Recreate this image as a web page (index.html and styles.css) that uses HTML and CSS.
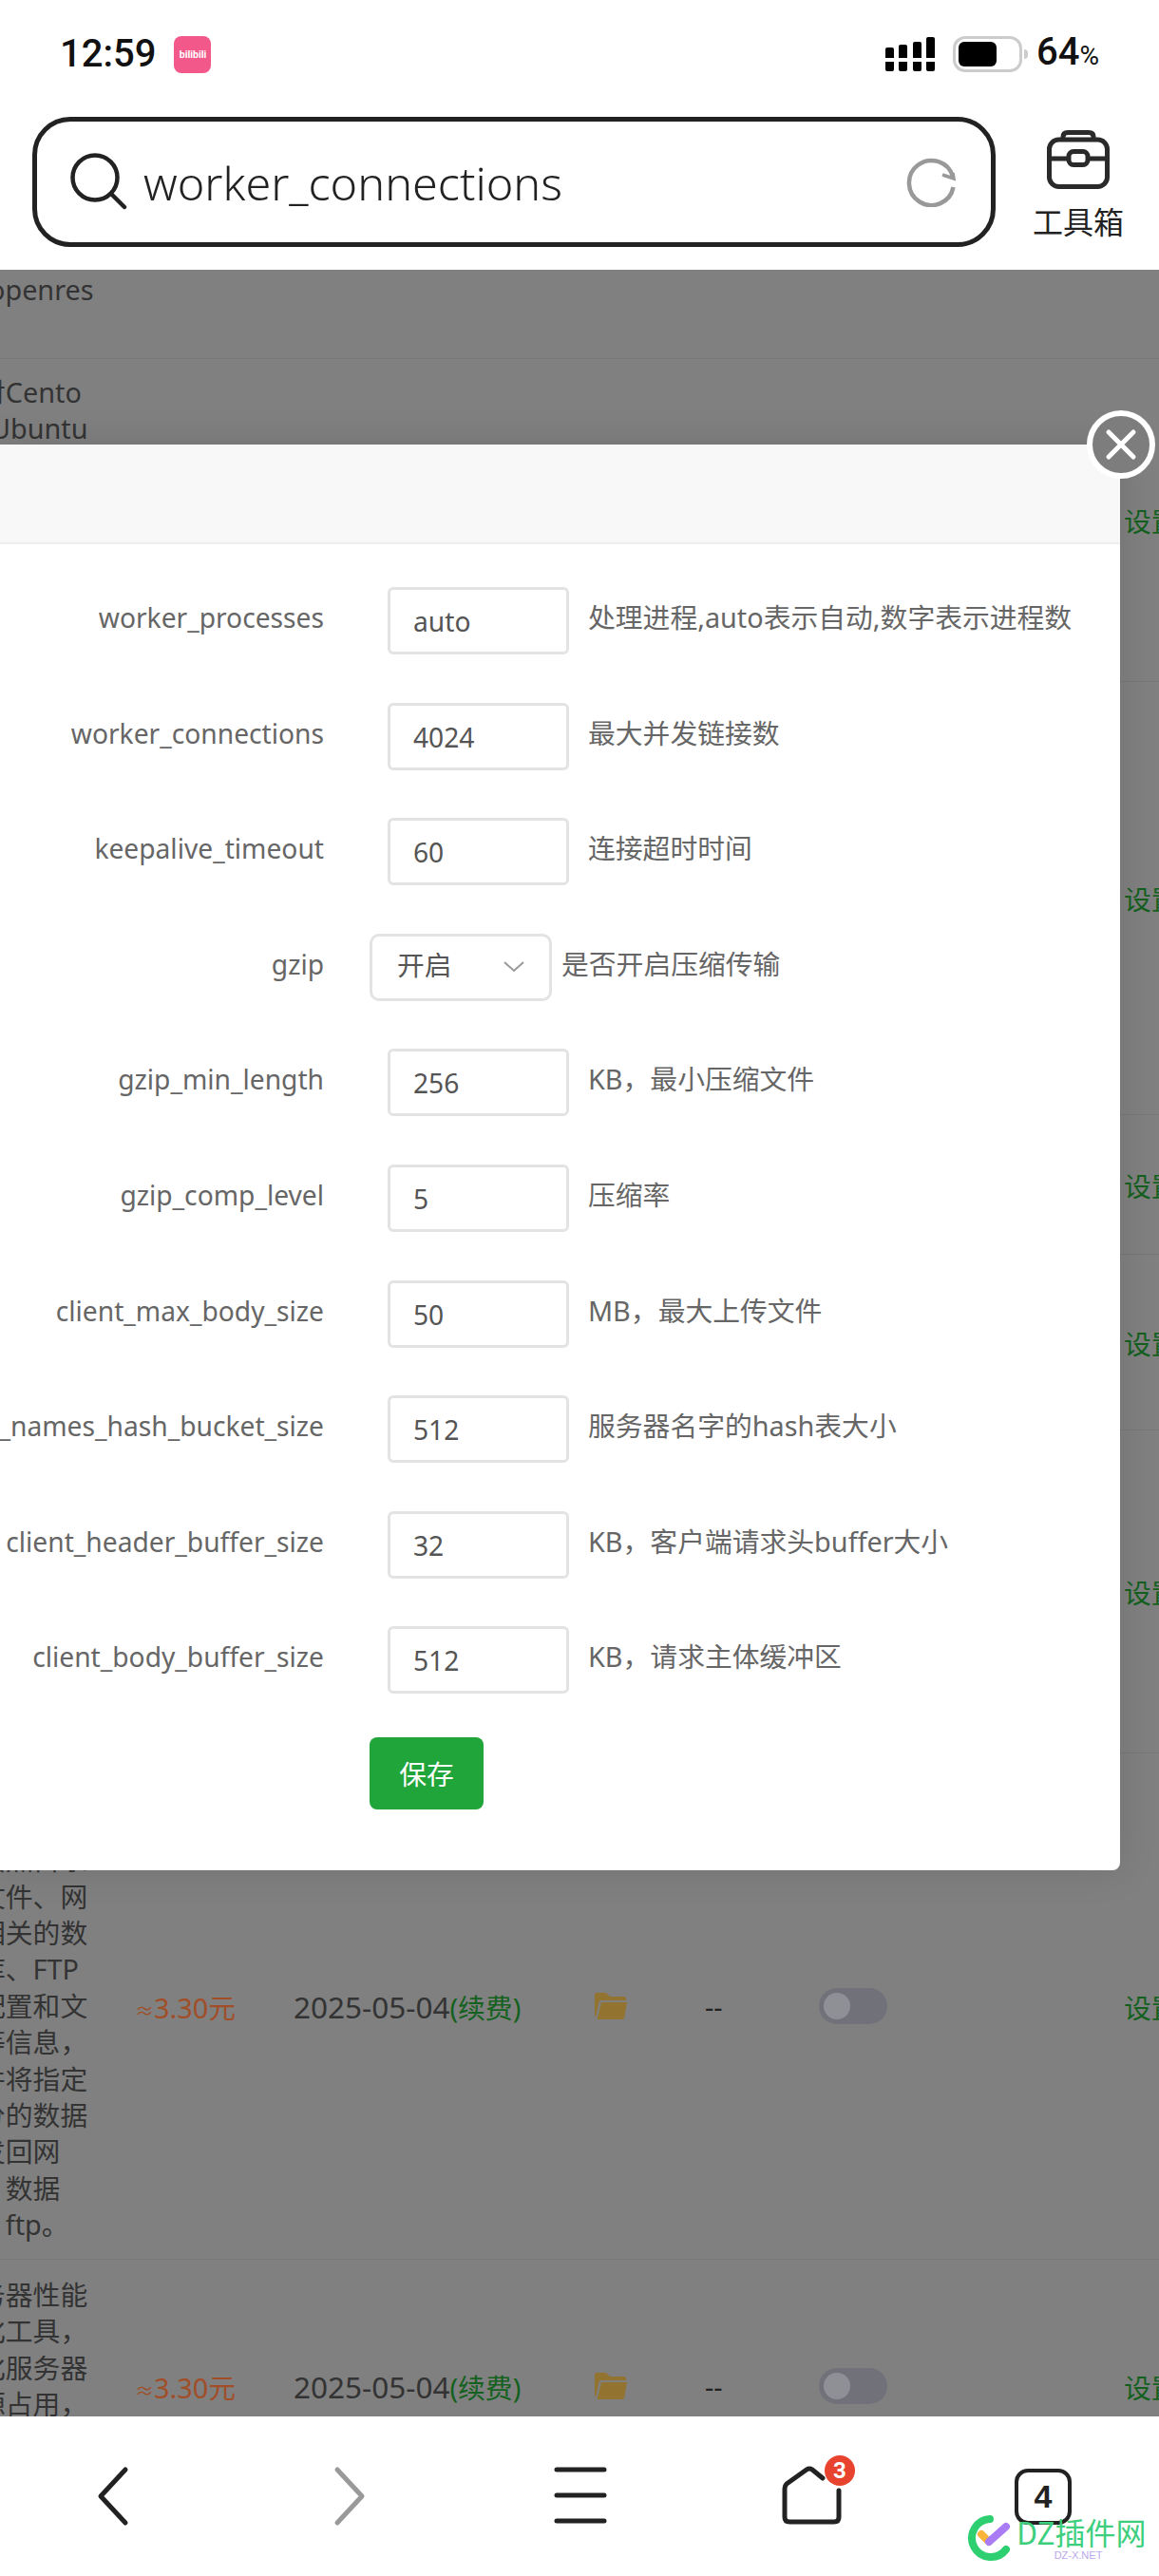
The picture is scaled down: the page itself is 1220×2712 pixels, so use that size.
FILE: index.html
```html
<!DOCTYPE html>
<html lang="zh">
<head>
<meta charset="utf-8">
<title>worker_connections</title>
<link rel="stylesheet" href="styles.css">
</head>
<body>
<div class="phone">
  <header class="top">
    <div class="status">
      <div class="status-left">
        <span class="clock">12:59</span>
        <span class="app-badge">bilibili</span>
      </div>
      <div class="status-right">
        <div class="signal">
          <span class="bar bar-1"></span><span class="bar bar-2"></span><span class="bar bar-3"></span><span class="bar bar-4"></span>
        </div>
        <div class="battery"><span class="battery-fill"></span></div>
        <span class="battery-nub"></span>
        <span class="percent">64<small>%</small></span>
      </div>
    </div>
    <div class="address">
      <div class="searchbox">
        <svg class="search-icon" viewBox="0 0 60 60" width="60" height="60"><circle cx="26" cy="26" r="23.5"/><path d="M43 43 L57 57"/></svg>
        <span class="query">worker_connections</span>
        <svg class="reload-icon" viewBox="0 0 52 52" width="52" height="52"><path d="M49 20 A23.5 23.5 0 1 0 49.500 31"/><path class="arrow" d="M38 18 L50 22 L49 16" /></svg>
      </div>
      <div class="toolbox">
        <svg viewBox="0 0 66 62" width="66" height="62"><rect x="2.500" y="10" width="61" height="49.500" rx="10"/><path d="M17 10 V7 Q17 2.500 22 2.500 H44 Q49 2.500 49 7 V10"/><path d="M2.500 30 H23 M43 30 H63.500"/><rect x="23" y="22.500" width="20" height="14" rx="5"/></svg>
        <span class="toolbox-label">工具箱</span>
      </div>
    </div>
  </header>

  <main class="backdrop">
    <div class="row row-first">
      <div class="desc"><div class="line line-open">openres</div></div>
    </div>
    <div class="row row-top">
      <div class="desc">
        <div class="line">对Cento</div>
        <div class="line line-ubuntu">Ubuntu</div>
      </div>
      <div></div><div></div><div></div><div></div><div></div>
      <a class="set set-center">设置</a>
    </div>
    <div class="row row-h456"><div></div><div></div><div></div><div></div><div></div><div></div><a class="set">设置</a></div>
    <div class="row row-h147"><div></div><div></div><div></div><div></div><div></div><div></div><a class="set">设置</a></div>
    <div class="row row-h185"><div></div><div></div><div></div><div></div><div></div><div></div><a class="set">设置</a></div>
    <div class="row row-h340"><div></div><div></div><div></div><div></div><div></div><div></div><a class="set">设置</a></div>
    <div class="row row-h533">
      <div class="desc">
        <div class="line">备份网站</div><div class="line">数据库和</div><div class="line">站点目录</div>
        <div class="line">文件、网</div><div class="line">相关的数</div><div class="line">库、FTP</div><div class="line">配置和文</div><div class="line">等信息，</div>
        <div class="line">并将指定</div><div class="line">分的数据</div><div class="line">发回网</div><div class="line">，数据</div><div class="line">、ftp。</div>
      </div>
      <div class="price"><span class="approx">≈</span>3.30元</div>
      <div class="date">2025-05-04<span class="renew">(续费)</span></div>
      <div><svg class="folder" viewBox="0 0 36 30" width="36" height="30"><path d="M1 3 Q1 1 3 1 H13 L17 5 H32 Q34 5 34 7 V9 H8 Q6 9 5.500 11 L2 27 Q1 26 1 25 Z"/><path d="M8 11 H35 L32 28 Q32 29 30 29 H3.500 Z"/></svg></div>
      <div class="dash">--</div>
      <div><span class="toggle"><span class="knob"></span></span></div>
      <a class="set">设置</a>
    </div>
    <div class="row row-last">
      <div class="desc">
        <div class="line">务器性能</div><div class="line">化工具，</div><div class="line">化服务器</div><div class="line">源占用，</div><div class="line">提高网站</div><div class="line">运行速度</div>
      </div>
      <div class="price"><span class="approx">≈</span>3.30元</div>
      <div class="date">2025-05-04<span class="renew">(续费)</span></div>
      <div><svg class="folder" viewBox="0 0 36 30" width="36" height="30"><path d="M1 3 Q1 1 3 1 H13 L17 5 H32 Q34 5 34 7 V9 H8 Q6 9 5.500 11 L2 27 Q1 26 1 25 Z"/><path d="M8 11 H35 L32 28 Q32 29 30 29 H3.500 Z"/></svg></div>
      <div class="dash">--</div>
      <div><span class="toggle"><span class="knob"></span></span></div>
      <a class="set">设置</a>
    </div>
  </main>

  <section class="modal">
    <div class="modal-head"></div>
    <form class="form">
      <div class="field"><label>worker_processes</label><span class="input">auto</span><span class="help">处理进程,auto表示自动,数字表示进程数</span></div>
      <div class="field"><label>worker_connections</label><span class="input">4024</span><span class="help">最大并发链接数</span></div>
      <div class="field"><label>keepalive_timeout</label><span class="input">60</span><span class="help">连接超时时间</span></div>
      <div class="field field-select"><label>gzip</label><span class="select"><span class="select-value">开启</span><svg viewBox="0 0 22 12" width="22" height="12"><path d="M1 1 L11 10 L21 1"/></svg></span><span class="help">是否开启压缩传输</span></div>
      <div class="field"><label>gzip_min_length</label><span class="input">256</span><span class="help">KB，最小压缩文件</span></div>
      <div class="field"><label>gzip_comp_level</label><span class="input">5</span><span class="help">压缩率</span></div>
      <div class="field"><label>client_max_body_size</label><span class="input">50</span><span class="help">MB，最大上传文件</span></div>
      <div class="field"><label>server_names_hash_bucket_size</label><span class="input">512</span><span class="help">服务器名字的hash表大小</span></div>
      <div class="field"><label>client_header_buffer_size</label><span class="input">32</span><span class="help">KB，客户端请求头buffer大小</span></div>
      <div class="field"><label>client_body_buffer_size</label><span class="input">512</span><span class="help">KB，请求主体缓冲区</span></div>
      <button class="save" type="button">保存</button>
    </form>
    <button class="close" type="button" aria-label="关闭"><svg viewBox="0 0 34 34" width="34" height="34"><path d="M4 4 L30 30 M30 4 L4 30"/></svg></button>
  </section>

  <nav class="bottom">
    <svg class="nav-icon" viewBox="0 0 40 64" width="40" height="64"><path d="M32 4 L6 32 L32 60"/></svg>
    <svg class="nav-icon nav-dim" viewBox="0 0 40 64" width="40" height="64"><path d="M6 4 L32 32 L6 60"/></svg>
    <svg class="nav-icon nav-menu" viewBox="0 0 60 60" width="60" height="60"><path d="M5 3 H55 M5 30 H55 M5 57 H55"/></svg>
    <div class="home">
      <svg class="nav-icon" viewBox="0 0 64 64" width="64" height="64"><path d="M44 13 L33 4 Q30 2 27 4 L6 19 Q4 21 4 24 V54 Q4 59 9 59 H56 Q61 59 61 54 V26"/></svg>
      <span class="badge">3</span>
    </div>
    <div class="tabs">4</div>
  </nav>

  <div class="watermark">
    <svg viewBox="0 0 50 50" width="50" height="50"><path class="ring" d="M24 5 A20 20 0 1 0 41 37"/><path class="tick-a" d="M15 21 L23 29"/><path class="tick-b" d="M23 29 L41 13"/></svg>
    <div class="mark-text">
      <span class="mark-title">DZ插件网</span>
      <span class="mark-sub">DZ-X.NET</span>
    </div>
  </div>
</div>
</body>
</html>
```
FILE: styles.css
```css
* { box-sizing: border-box; }
html, body { margin: 0; padding: 0; }
body { background: #fff; font-family: "Noto Sans", "Noto Sans CJK SC", sans-serif; color: #666; }

.phone { position: relative; width: 1220px; height: 2712px; overflow: hidden; display: flex; flex-direction: column; background: #808080; }

/* browser chrome */
.top { height: 284px; flex: none; background: #fff; padding-top: 32px; }
.status { height: 50px; display: flex; justify-content: space-between; align-items: center; padding: 0 62px 0 63px; }
.status-left, .status-right { display: flex; align-items: center; }
.clock { font: 500 40px/50px Roboto, sans-serif; color: #111; }
.app-badge { width: 39px; height: 39px; margin-left: 19px; border-radius: 8px; background: #f2588a; color: #fff; font: 700 10.5px/39px Roboto, sans-serif; text-align: center; overflow: hidden; }
.signal { display: flex; gap: 5.500px; align-items: flex-end; height: 36px; margin-right: 19px; }
.bar { display: block; width: 9px; border-radius: 2px; background: linear-gradient(#000 0, #000 var(--cut), #fff var(--cut), #fff calc(var(--cut) + 4px), #000 calc(var(--cut) + 4px)); }
.bar-1 { height: 25px; --cut: 11px; }
.bar-2 { height: 28px; --cut: 14px; }
.bar-3 { height: 31px; --cut: 17px; }
.bar-4 { height: 36px; --cut: 22px; }
.battery { width: 73px; height: 38px; border: 3px solid #ccc; border-radius: 13px; padding: 3px; }
.battery-fill { display: block; width: 40px; height: 26px; border-radius: 6px; background: #000; }
.battery-nub { width: 4px; height: 10px; margin-left: 2px; margin-right: 9px; border-radius: 0 4px 4px 0; background: #ccc; }
.percent { font: 500 40px/50px Roboto, sans-serif; color: #111; margin-right: 1px; }
.percent small { font-size: 28px; font-weight: 400; }

.address { display: flex; align-items: flex-start; margin-top: 41px; padding-left: 34px; }
.searchbox { width: 1014px; height: 137px; border: 5px solid #222; border-radius: 40px; flex: none; display: flex; align-items: center; padding: 0 37px 0 35px; }
.search-icon { flex: none; fill: none; stroke: #222; stroke-width: 4.500; stroke-linecap: round; margin-bottom: 2px; }
.query { flex: 1; margin-left: 17px; font: 300 48.500px/60px "Noto Sans", sans-serif; color: #222; }
.reload-icon { flex: none; fill: none; stroke: #999; stroke-width: 4.500; }
.reload-icon .arrow { stroke-width: 3.500; }
.toolbox { width: 174px; flex: none; display: flex; flex-direction: column; align-items: center; padding-top: 14px; }
.toolbox svg { fill: none; stroke: #2a2a2a; stroke-width: 5; }
.toolbox-label { margin-top: 15px; font: 400 32px/36px "Noto Sans CJK SC", sans-serif; color: #222; white-space: nowrap; }

/* dimmed page behind the dialog */
.backdrop { flex: 1; min-height: 0; overflow: hidden; background: #808080; }
.row { display: grid; grid-template-columns: 165px 167px 316px 117px 120px 321px 60px; align-items: center; margin-left: -23px; border-bottom: 1px solid #777; font-size: 28.800px; color: #333; white-space: nowrap; font-family: "Noto Sans", "Noto Sans CJK SC", sans-serif; }
.row-first { height: 94px; align-items: end; padding-bottom: 53px; }
.row-top { height: 340px; }
.row-top .desc { align-self: start; padding-top: 16px; }
.row-h456 { height: 456px; }
.row-h147 { height: 147px; }
.row-h185 { height: 185px; }
.row-h340 { height: 340px; }
.row-h533 { height: 533px; }
.row-last { height: 266px; border-bottom: 0; }
.desc { color: #333; }
.line { height: 38.400px; line-height: 38.400px; }
.line-open { margin-left: 11px; }
.line-ubuntu { margin-left: 13px; }
.price { color: #a04e28; font-size: 28.800px; }
.approx { font-size: 20px; }
.date { color: #333; font-size: 31.500px; }
.renew { color: #14601f; font-size: 28.800px; }
.folder { display: block; fill: #937330; }
.dash { color: #222; }
.toggle { display: block; width: 72px; height: 38px; border-radius: 19px; background: #71717a; padding: 5px; }
.knob { display: block; width: 28px; height: 28px; border-radius: 50%; background: #8f8f96; }
.set { color: #14601f; }

/* dialog */
.modal { position: absolute; left: 0; top: 468px; width: 1179px; height: 1501px; background: #fff; border-radius: 0 0 8px 0; box-shadow: 0 0 40px rgba(0,0,0,.12); }
.modal-head { height: 105px; background: #f8f8f8; border-bottom: 2px solid #eee; }
.form { padding-top: 45px; }
.field { height: 121.600px; display: flex; align-items: flex-start; font-size: 28.800px; color: #666; white-space: nowrap; }
.field label { width: 341px; flex: none; display: flex; justify-content: flex-end; line-height: 64px; overflow: hidden; font-size: 28.200px; font-family: "Noto Sans", sans-serif; }
.input { width: 191px; height: 71px; margin-left: 67px; flex: none; border: 3px solid #e3e3e3; border-radius: 6px; padding-left: 24px; line-height: 66px; font-size: 28.200px; color: #555; }
.help { margin-left: 20px; line-height: 64px; }
.select { width: 192px; height: 71px; margin-left: 48px; flex: none; border: 3px solid #e3e3e3; border-radius: 10px; padding: 0 26px; color: #555; display: flex; align-items: center; justify-content: space-between; }
.select-value { line-height: 58px; height: 62px; }
.select svg { fill: none; stroke: #999; stroke-width: 2; }
.field-select .help { margin-left: 10px; }
.save { display: block; width: 120px; height: 76px; margin: -5px 0 0 389px; border: 0; border-radius: 8px; background: #20a53a; color: #fff; font: 400 28.800px/76px "Noto Sans CJK SC", sans-serif; padding: 0; }
.close { position: absolute; left: 1144px; top: -36px; width: 72px; height: 72px; border: 6px solid #fff; border-radius: 50%; background: #7d7d7d; display: flex; align-items: center; justify-content: center; padding: 0; }
.close svg { fill: none; stroke: #fff; stroke-width: 5; stroke-linecap: round; }

/* bottom navigation */
.bottom { height: 168px; flex: none; position: relative; background: #fff; display: flex; align-items: flex-start; padding: 52px 0 0 100px; }
.nav-icon { display: block; fill: none; stroke: #222; stroke-width: 5; stroke-linecap: round; stroke-linejoin: round; }
.nav-dim { stroke: #999; margin-left: 209px; }
.nav-menu { margin: 1px 0 0 192px; }
.home { position: relative; margin-left: 181px; }
.badge { position: absolute; left: 46px; top: -11px; width: 32px; height: 32px; border-radius: 50%; background: #e8432e; color: #fff; font: 700 24px/32px Roboto, sans-serif; text-align: center; }
.tabs { width: 60px; height: 59px; margin: 3px 0 0 182px; border: 4.500px solid #222; border-radius: 14px; font: 700 34px/50px "Liberation Sans", sans-serif; color: #222; text-align: center; }

/* watermark */
.watermark { position: absolute; left: 1018px; top: 2647px; display: flex; gap: 2px; }
.watermark svg { fill: none; stroke-linecap: round; }
.ring { stroke: #2ecf70; stroke-width: 8; }
.tick-a { stroke: #f9b43a; stroke-width: 8; }
.tick-b { stroke: #a97cf5; stroke-width: 8; }
.mark-text { display: flex; flex-direction: column; width: 130px; }
.mark-title { font: 400 32px/36px "Noto Sans CJK SC", sans-serif; color: #3ecf7e; white-space: nowrap; }
.mark-sub { font: 400 11px/14px "Liberation Sans", sans-serif; color: #b9a8ea; text-align: center; }
```
